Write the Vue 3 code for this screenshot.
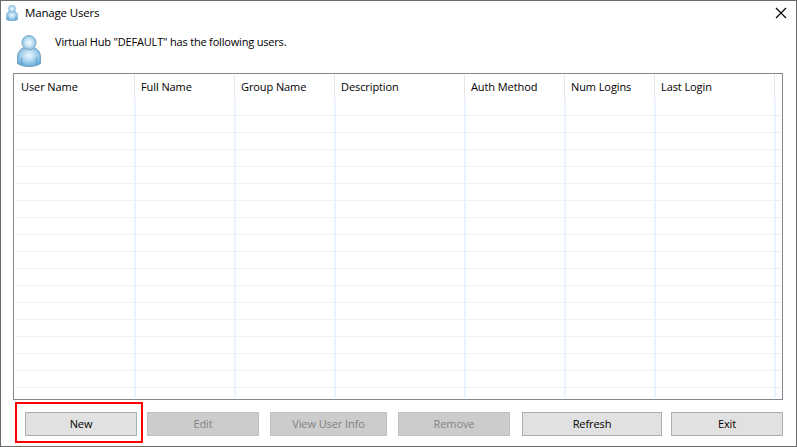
<script setup>
const columns = [
  { label: 'User Name', width: 120 },
  { label: 'Full Name', width: 100 },
  { label: 'Group Name', width: 100 },
  { label: 'Description', width: 130 },
  { label: 'Auth Method', width: 100 },
  { label: 'Num Logins', width: 90 },
  { label: 'Last Login', width: 120 },
]
const buttons = [
  { label: 'New', width: 112, gap: 0, marked: true },
  { label: 'Edit', width: 112, gap: 10, disabled: true },
  { label: 'View User Info', width: 117, gap: 11, disabled: true },
  { label: 'Remove', width: 112, gap: 11, disabled: true },
  { label: 'Refresh', width: 140, gap: 12 },
  { label: 'Exit', width: 112, gap: 9 },
]
</script>

<template>
  <div class="window">
    <svg class="defs" width="0" height="0">
      <defs>
        <radialGradient id="head" cx=".5" cy=".5" r=".55">
          <stop offset="0" stop-color="#f4fbff" />
          <stop offset=".5" stop-color="#c5e3f5" />
          <stop offset="1" stop-color="#78b6dc" />
        </radialGradient>
        <radialGradient id="body" cx=".5" cy=".4" r=".64">
          <stop offset="0" stop-color="#eef8fe" />
          <stop offset=".5" stop-color="#a9d4ee" />
          <stop offset="1" stop-color="#5aa5d6" />
        </radialGradient>
        <symbol id="user" viewBox="0 0 24 32">
          <path d="M6 13C2 15 .5 18.500.5 22v6.500C3 30.600 7.500 31.500 12 31.500s9-.9 11.500-3V22c0-3.500-1.500-7-5.500-9z" fill="url(#body)" stroke="#6e9dbd" stroke-width=".9" />
          <path d="M4.500 22.500c0 3 .2 4.500 1 7M19.500 22.500c0 3-.2 4.500-1 7" stroke="#4d92c4" stroke-width=".7" fill="none" />
          <circle cx="12" cy="7.600" r="7.100" fill="url(#head)" stroke="#7fa9c4" stroke-width=".9" />
        </symbol>
      </defs>
    </svg>
    <header class="titlebar">
      <svg class="icon-small"><use href="#user" /></svg>
      <span class="title">Manage Users</span>
      <svg class="close" viewBox="0 0 10 10"><path d="M0 0L10 10M10 0L0 10" stroke="#000" stroke-width="1.15" /></svg>
    </header>
    <div class="intro">
      <svg class="icon-large"><use href="#user" /></svg>
      <span class="message">Virtual Hub "DEFAULT" has the following users.</span>
    </div>
    <div class="list">
      <div class="grid">
        <div v-for="c in columns" :key="c.label" class="column" :style="{ width: c.width + 'px' }">
          <div class="heading">{{ c.label }}</div>
          <div class="cells"></div>
        </div>
      </div>
    </div>
    <footer class="actions">
      <div v-for="b in buttons" :key="b.label" class="slot" :class="{ marked: b.marked }" :style="{ width: b.width + 'px', marginLeft: b.gap + 'px' }">
        <button :disabled="b.disabled">{{ b.label }}</button>
      </div>
    </footer>
  </div>
</template>

<style>
body { margin: 0; background: #fff; }
</style>

<style scoped>
.window {
  box-sizing: border-box;
  width: 797px;
  height: 447px;
  border: 1px solid #6b6b6b;
  background: #fff;
  color: #000;
  font: 11px/16px "Open Sans", "Noto Sans", sans-serif;
  letter-spacing: -0.09px;
  display: flex;
  flex-direction: column;
  overflow: hidden;
  white-space: nowrap;
}
.defs { position: absolute; }
.titlebar { display: flex; height: 30px; flex: none; }
.icon-small { width: 12px; height: 16px; margin: 4px 0 0 5px; }
.title { margin: 4px 0 0 7px; font-size: 11.5px; letter-spacing: -0.17px; }
.close { width: 10px; height: 10px; margin: 7px 10px 0 auto; overflow: visible; }
.intro { display: flex; height: 42px; flex: none; }
.icon-large { width: 24px; height: 32px; margin: 4px 0 0 16px; }
.message { margin: 3px 0 0 14px; letter-spacing: -0.18px; }
.list {
  box-sizing: border-box;
  width: 770px;
  height: 327px;
  flex: none;
  margin-left: 12px;
  border: 1px solid #828790;
  padding: 1px;
}
.grid {
  display: flex;
  width: 766px;
  height: 323px;
  background: repeating-linear-gradient(to bottom, transparent 0 16px, #f0f0f0 16px 17px) 0 24px / 100% 100% no-repeat;
}
.column {
  box-sizing: border-box;
  display: flex;
  flex-direction: column;
  flex: none;
}
.heading { box-sizing: border-box; height: 24px; padding: 4px 0 0 6px; border-right: 1px solid #e5e5e5; }
.cells { flex: 1; border-right: 2px solid #ebf4fe; margin-right: -1px; }
.actions { display: flex; padding: 12px 0 0 24px; }
.slot { position: relative; height: 24px; flex: none; }
.slot.marked::after {
  content: "";
  position: absolute;
  left: -10px;
  top: -10px;
  width: 124px;
  height: 37px;
  border: 2px solid #f00;
}
button {
  box-sizing: border-box;
  width: 100%;
  height: 24px;
  border: 1px solid #adadad;
  background: #e1e1e1;
  color: #000;
  font: inherit;
  letter-spacing: inherit;
  padding: 0;
  display: block;
}
button:disabled { background: #ccc; border-color: #bfbfbf; color: #838383; }
</style>
